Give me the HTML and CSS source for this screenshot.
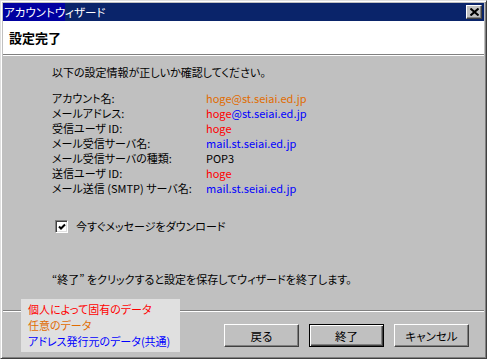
FILE: index.html
```html
<!DOCTYPE html>
<html lang="ja">
<head>
<meta charset="utf-8">
<link rel="stylesheet" href="styles.css">
</head>
<body>
<div class="window">
  <div class="titlebar">
    <span class="title"><span class="sel">アカウントウ</span>ィザード</span>
    <span class="close"><svg width="9" height="8" viewBox="0 0 9 8"><path d="M0.5 0.5 L8.5 7.5 M8.5 0.5 L0.5 7.5" stroke="#000" stroke-width="2" fill="none"/></svg></span>
  </div>
  <div class="header">設定完了</div>
  <div class="body">
    <p class="intro">以下の設定情報が正しいか確認してください。</p>
    <div class="rows">
      <div class="row"><span class="label">アカウント名:</span><span class="orange">hoge@st.seiai.ed.jp</span></div>
      <div class="row"><span class="label">メールアドレス:</span><span><span class="red">hoge</span><span class="blue">@st.seiai.ed.jp</span></span></div>
      <div class="row"><span class="label">受信ユーザ ID:</span><span class="red">hoge</span></div>
      <div class="row"><span class="label">メール受信サーバ名:</span><span class="blue">mail.st.seiai.ed.jp</span></div>
      <div class="row"><span class="label">メール受信サーバの種類:</span><span>POP3</span></div>
      <div class="row"><span class="label">送信ユーザ ID:</span><span class="red">hoge</span></div>
      <div class="row"><span class="label">メール送信 (SMTP) サーバ名:</span><span class="blue">mail.st.seiai.ed.jp</span></div>
    </div>
    <div class="check">
      <span class="box"><svg width="8" height="8" viewBox="0 0 8 8"><path d="M1 3.5 L3 5.5 L7 1.5" stroke="#000" stroke-width="2" fill="none"/></svg></span>
      <span>今すぐメッセージをダウンロード</span>
    </div>
    <p class="finish">“終了” をクリックすると設定を保存してウィザードを終了します。</p>
  </div>
  <div class="footer">
    <button class="btn">戻る</button>
    <button class="btn default">終了</button>
    <button class="btn">キャンセル</button>
  </div>
  <div class="legend">
    <div class="red">個人によって固有のデータ</div>
    <div class="orange">任意のデータ</div>
    <div class="blue">アドレス発行元のデータ(共通)</div>
  </div>
</div>
</body>
</html>
```
FILE: styles.css
```css
html, body {
  margin: 0;
  padding: 0;
  background: #c0c0c0;
}
body {
  font-family: "Noto Sans CJK JP", "Liberation Sans", sans-serif;
  font-size: 11px;
  font-feature-settings: "palt";
  color: #000;
}
.window {
  position: relative;
  width: 487px;
  height: 359px;
  box-sizing: border-box;
  background: #c0c0c0;
  border: 1px solid;
  border-color: #dfdfdf #404040 #404040 #dfdfdf;
  box-shadow: inset 1px 1px 0 #fff, inset -1px -1px 0 #808080;
  padding: 2px;
  display: flex;
  flex-direction: column;
}
.titlebar {
  height: 18px;
  background: #0a246a;
  color: #fff;
  font-size: 11.5px;
  display: flex;
  align-items: center;
  justify-content: space-between;
  line-height: 18px;
  white-space: nowrap;
}
.sel {
  background: #0000a0;
  padding-left: 1px;
  display: inline-block;
  line-height: 18px;
}
.close {
  width: 14px;
  height: 12px;
  margin-right: 2px;
  background: #c0c0c0;
  border: 1px solid;
  border-color: #fff #404040 #404040 #fff;
  box-shadow: inset -1px -1px 0 #808080;
  display: flex;
  align-items: center;
  justify-content: center;
}
.close svg { display: block; }
.header {
  height: 33px;
  background: #fff;
  font-weight: bold;
  font-size: 13px;
  padding-left: 6px;
  display: flex;
  align-items: center;
  border-bottom: 1px solid #808080;
  box-shadow: 0 1px 0 #fff;
  margin-bottom: 1px;
}
.body {
  flex: 1;
  padding: 9px 0 0 49px;
  white-space: nowrap;
}
.body p {
  margin: 0;
  line-height: 15px;
}
.rows {
  margin-top: 11px;
}
.row {
  display: flex;
  line-height: 15px;
}
.label {
  width: 154px;
  flex: none;
}
.check {
  margin-top: 23px;
  display: flex;
  align-items: center;
  line-height: 15px;
  padding-left: 3px;
}
.box {
  width: 9px;
  height: 9px;
  background: #fff;
  border: 1px solid;
  border-color: #808080 #fff #fff #808080;
  box-shadow: inset 1px 1px 0 #404040, inset -1px -1px 0 #dfdfdf;
  padding: 1px;
  margin-right: 8px;
  display: flex;
  align-items: center;
  justify-content: center;
}
.box svg { display: block; }
.body p.finish {
  margin-top: 38px;
}
.footer {
  height: 46px;
  border-top: 1px solid #808080;
  box-shadow: inset 0 1px 0 #fff;
  display: flex;
  justify-content: flex-end;
  align-items: flex-start;
  gap: 10px;
  padding: 13px 15px 0 0;
  box-sizing: border-box;
}
.btn {
  width: 75px;
  height: 23px;
  box-sizing: border-box;
  background: #c0c0c0;
  border: 1px solid;
  border-color: #fff #404040 #404040 #fff;
  box-shadow: inset -1px -1px 0 #808080;
  font-family: inherit;
  font-size: 11.5px;
  font-feature-settings: "palt";
  color: #000;
  padding: 0;
}
.btn.default {
  border: 1px solid #000;
  box-shadow: inset 1px 1px 0 #fff, inset -1px -1px 0 #404040, inset -2px -2px 0 #808080;
}
.legend {
  position: absolute;
  left: 20px;
  top: 298px;
  width: 159px;
  height: 53px;
  box-sizing: border-box;
  background: #e0e0e0;
  padding: 2px 0 0 7px;
  line-height: 16px;
  white-space: nowrap;
}
.red { color: #ff0000; }
.orange { color: #e06c00; }
.blue { color: #0000ff; }
```
